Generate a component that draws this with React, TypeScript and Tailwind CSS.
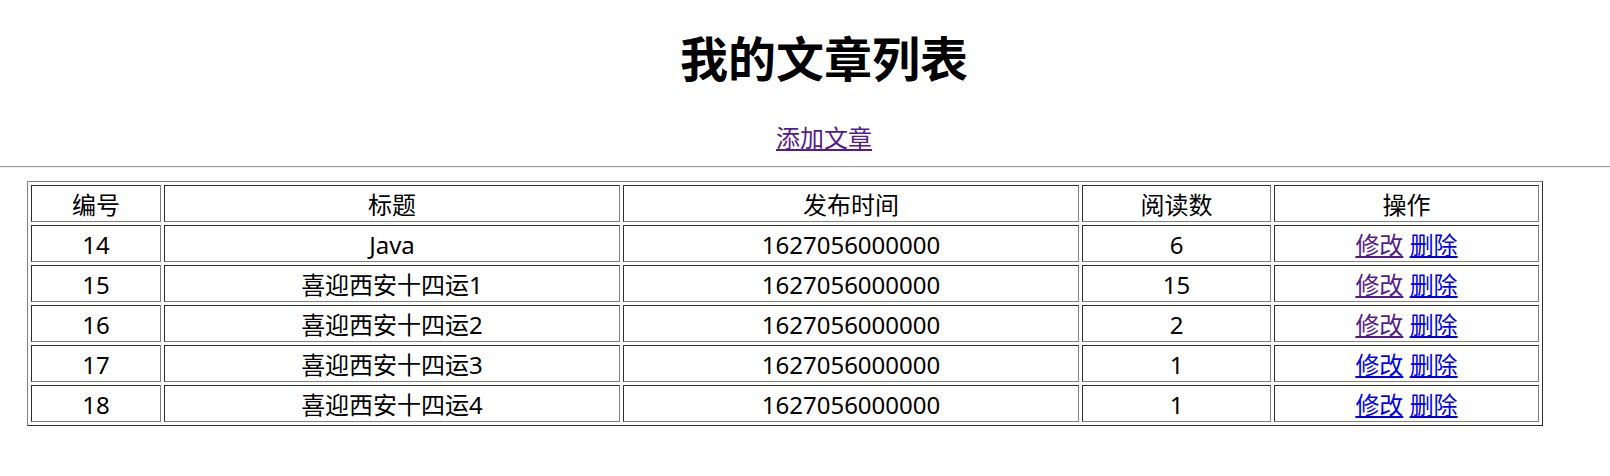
import React from "react";

type Article = { id: number; title: string; time: string; reads: number; visited: boolean };

const ARTICLES: Article[] = [
  { id: 14, title: "Java", time: "1627056000000", reads: 6, visited: true },
  { id: 15, title: "喜迎西安十四运1", time: "1627056000000", reads: 15, visited: true },
  { id: 16, title: "喜迎西安十四运2", time: "1627056000000", reads: 2, visited: true },
  { id: 17, title: "喜迎西安十四运3", time: "1627056000000", reads: 1, visited: false },
  { id: 18, title: "喜迎西安十四运4", time: "1627056000000", reads: 1, visited: false },
];

const HEAD = ["编号", "标题", "发布时间", "阅读数", "操作"];

function Cell({ children }: { children: React.ReactNode }) {
  return (
    <div className="flex h-[37px] items-center justify-center border border-t-[#2e2e2e] border-l-[#2e2e2e] border-r-[#808080] border-b-[#808080] pt-[2px] text-center leading-[32px]">
      {children}
    </div>
  );
}

export default function App() {
  return (
    <div className="h-[476px] w-[1610px] overflow-hidden bg-white pt-[35px] font-['Noto_Sans','Noto_Sans_CJK_SC',sans-serif] text-black">
      <div className="pl-[38px] text-center">
        <h1 className="h-[48px] text-[48px] font-bold leading-[48px]">我的文章列表</h1>
        <div className="mt-[43px] h-[24px] text-[24px] leading-[24px]">
          <a href="#" className="text-[#551a8b] underline">
            添加文章
          </a>
        </div>
      </div>

      <hr className="mt-[16px] border-t border-b border-t-[#9a9a9a] border-b-[#eeeeee]" />

      <div className="ml-[27px] mt-[13px] w-[1516px] border border-t-[#808080] border-l-[#808080] border-r-[#2e2e2e] border-b-[#2e2e2e] p-[3px] text-[24px]">
        <div className="grid grid-cols-[130px_456px_456px_189px_265px] gap-[3px]">
          {HEAD.map((h) => (
            <Cell key={h}>{h}</Cell>
          ))}
          {ARTICLES.map((a) => (
            <React.Fragment key={a.id}>
              <Cell>{a.id}</Cell>
              <Cell>{a.title}</Cell>
              <Cell>{a.time}</Cell>
              <Cell>{a.reads}</Cell>
              <Cell>
                <a href="#" className={a.visited ? "text-[#551a8b] underline" : "text-[#0000ee] underline"}>
                  修改
                </a>
                <span>&nbsp;</span>
                <a href="#" className="text-[#0000ee] underline">
                  删除
                </a>
              </Cell>
            </React.Fragment>
          ))}
        </div>
      </div>
    </div>
  );
}
